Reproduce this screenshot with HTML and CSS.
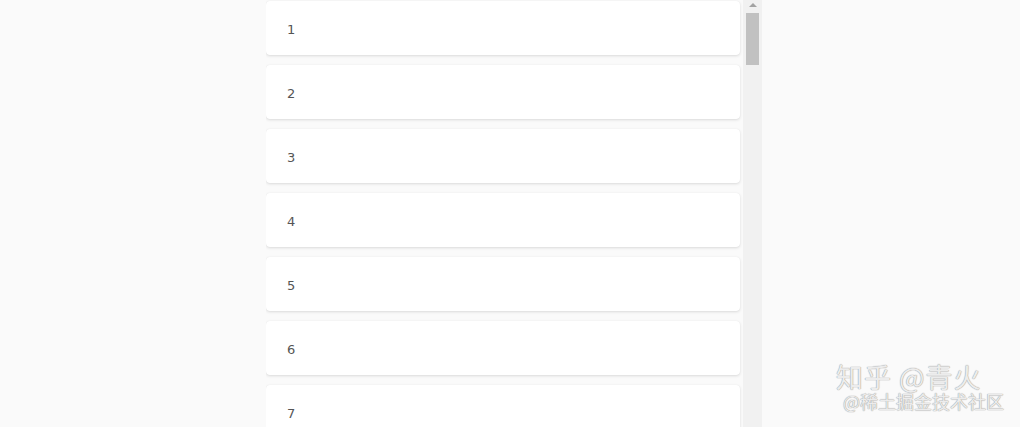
FILE: index.html
```html
<!DOCTYPE html>
<html>
<head>
<meta charset="utf-8">
<link rel="stylesheet" href="styles.css">
</head>
<body>
<div class="page">
  <div class="scroller">
    <div class="list">
      <div class="card">1</div>
      <div class="card">2</div>
      <div class="card">3</div>
      <div class="card">4</div>
      <div class="card">5</div>
      <div class="card">6</div>
      <div class="card">7</div>
    </div>
    <div class="scrollbar">
      <div class="arrow"></div>
      <div class="thumb"></div>
    </div>
  </div>
</div>
<div class="watermark">
  <div class="wm-big">知乎 @青火</div>
  <div class="wm-small">@稀土掘金技术社区</div>
</div>
</body>
</html>
```
FILE: styles.css
```css
html, body {
  margin: 0;
  padding: 0;
  background: #fafafa;
  height: 427px;
  overflow: hidden;
}
.page {
  padding-left: 266px;
}
.scroller {
  display: flex;
  width: 496px;
  height: 427px;
  overflow: hidden;
}
.list {
  width: 474px;
  padding-top: 1px;
  display: flex;
  flex-direction: column;
  gap: 10px;
  flex: none;
}
.card {
  height: 54px;
  flex: none;
  box-sizing: border-box;
  background: #fff;
  border-radius: 4px;
  box-shadow: 0 1px 3px rgba(0,0,0,0.13), 0 0 1px rgba(0,0,0,0.06);
  padding-left: 21px;
  padding-top: 2px;
  display: flex;
  align-items: center;
  font-family: "DejaVu Sans", sans-serif;
  font-size: 13px;
  color: #555;
}
.scrollbar {
  margin-left: 3px;
  width: 19px;
  height: 427px;
  background: #f1f1f1;
  display: flex;
  flex-direction: column;
  align-items: center;
}
.arrow {
  margin-top: 3px;
  width: 0;
  height: 0;
  border-left: 4px solid transparent;
  border-right: 4px solid transparent;
  border-bottom: 4px solid #a3a3a3;
}
.thumb {
  margin-top: 6px;
  width: 13px;
  height: 52px;
  background: #c1c1c1;
}
.watermark {
  position: absolute;
  left: 836px;
  top: 362px;
  font-family: "Noto Sans CJK SC", sans-serif;
  color: #ececec;
  text-shadow: 0 0 1px #999, 0 0 1px #aaa;
  pointer-events: none;
}
.wm-big {
  font-size: 27px;
  line-height: 30px;
  letter-spacing: 1px;
}
.wm-small {
  margin-top: -2px;
  margin-left: 7px;
  font-size: 18px;
  line-height: 22px;
}
```
